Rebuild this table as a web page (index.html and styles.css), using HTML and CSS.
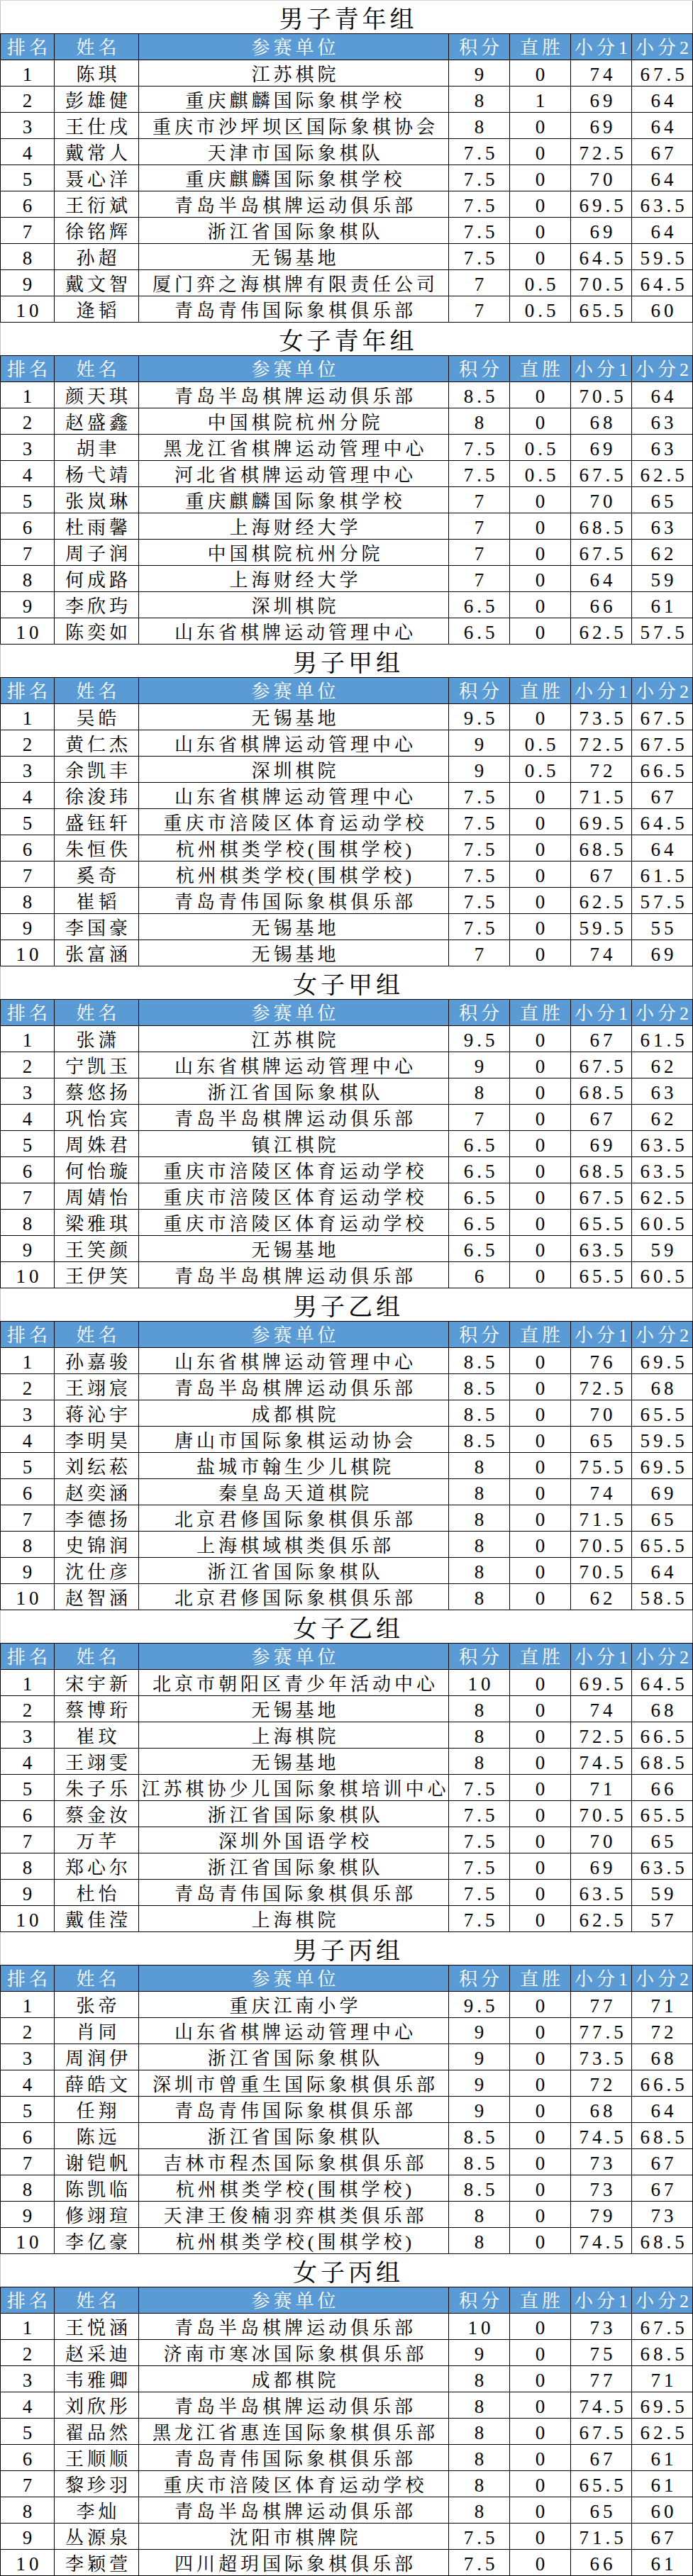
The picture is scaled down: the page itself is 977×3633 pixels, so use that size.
FILE: index.html
```html
<!DOCTYPE html>
<html lang="zh-CN">
<head>
<meta charset="utf-8">
<title>成绩表</title>
<link rel="stylesheet" href="styles.css">
</head>
<body>
<div class="sheet">

<section class="group">
<div class="title">男子青年组</div>
<div class="row head"><div>排名</div><div>姓名</div><div>参赛单位</div><div>积分</div><div>直胜</div><div>小分1</div><div>小分2</div></div>
<div class="row"><div>1</div><div>陈琪</div><div>江苏棋院</div><div>9</div><div>0</div><div>74</div><div>67.5</div></div>
<div class="row"><div>2</div><div>彭雄健</div><div>重庆麒麟国际象棋学校</div><div>8</div><div>1</div><div>69</div><div>64</div></div>
<div class="row"><div>3</div><div>王仕戌</div><div>重庆市沙坪坝区国际象棋协会</div><div>8</div><div>0</div><div>69</div><div>64</div></div>
<div class="row"><div>4</div><div>戴常人</div><div>天津市国际象棋队</div><div>7.5</div><div>0</div><div>72.5</div><div>67</div></div>
<div class="row"><div>5</div><div>聂心洋</div><div>重庆麒麟国际象棋学校</div><div>7.5</div><div>0</div><div>70</div><div>64</div></div>
<div class="row"><div>6</div><div>王衍斌</div><div>青岛半岛棋牌运动俱乐部</div><div>7.5</div><div>0</div><div>69.5</div><div>63.5</div></div>
<div class="row"><div>7</div><div>徐铭辉</div><div>浙江省国际象棋队</div><div>7.5</div><div>0</div><div>69</div><div>64</div></div>
<div class="row"><div>8</div><div>孙超</div><div>无锡基地</div><div>7.5</div><div>0</div><div>64.5</div><div>59.5</div></div>
<div class="row"><div>9</div><div>戴文智</div><div>厦门弈之海棋牌有限责任公司</div><div>7</div><div>0.5</div><div>70.5</div><div>64.5</div></div>
<div class="row"><div>10</div><div>逄韬</div><div>青岛青伟国际象棋俱乐部</div><div>7</div><div>0.5</div><div>65.5</div><div>60</div></div>
</section>

<section class="group">
<div class="title">女子青年组</div>
<div class="row head"><div>排名</div><div>姓名</div><div>参赛单位</div><div>积分</div><div>直胜</div><div>小分1</div><div>小分2</div></div>
<div class="row"><div>1</div><div>颜天琪</div><div>青岛半岛棋牌运动俱乐部</div><div>8.5</div><div>0</div><div>70.5</div><div>64</div></div>
<div class="row"><div>2</div><div>赵盛鑫</div><div>中国棋院杭州分院</div><div>8</div><div>0</div><div>68</div><div>63</div></div>
<div class="row"><div>3</div><div>胡聿</div><div>黑龙江省棋牌运动管理中心</div><div>7.5</div><div>0.5</div><div>69</div><div>63</div></div>
<div class="row"><div>4</div><div>杨弋靖</div><div>河北省棋牌运动管理中心</div><div>7.5</div><div>0.5</div><div>67.5</div><div>62.5</div></div>
<div class="row"><div>5</div><div>张岚琳</div><div>重庆麒麟国际象棋学校</div><div>7</div><div>0</div><div>70</div><div>65</div></div>
<div class="row"><div>6</div><div>杜雨馨</div><div>上海财经大学</div><div>7</div><div>0</div><div>68.5</div><div>63</div></div>
<div class="row"><div>7</div><div>周子润</div><div>中国棋院杭州分院</div><div>7</div><div>0</div><div>67.5</div><div>62</div></div>
<div class="row"><div>8</div><div>何成路</div><div>上海财经大学</div><div>7</div><div>0</div><div>64</div><div>59</div></div>
<div class="row"><div>9</div><div>李欣玙</div><div>深圳棋院</div><div>6.5</div><div>0</div><div>66</div><div>61</div></div>
<div class="row"><div>10</div><div>陈奕如</div><div>山东省棋牌运动管理中心</div><div>6.5</div><div>0</div><div>62.5</div><div>57.5</div></div>
</section>

<section class="group">
<div class="title">男子甲组</div>
<div class="row head"><div>排名</div><div>姓名</div><div>参赛单位</div><div>积分</div><div>直胜</div><div>小分1</div><div>小分2</div></div>
<div class="row"><div>1</div><div>吴皓</div><div>无锡基地</div><div>9.5</div><div>0</div><div>73.5</div><div>67.5</div></div>
<div class="row"><div>2</div><div>黄仁杰</div><div>山东省棋牌运动管理中心</div><div>9</div><div>0.5</div><div>72.5</div><div>67.5</div></div>
<div class="row"><div>3</div><div>余凯丰</div><div>深圳棋院</div><div>9</div><div>0.5</div><div>72</div><div>66.5</div></div>
<div class="row"><div>4</div><div>徐浚玮</div><div>山东省棋牌运动管理中心</div><div>7.5</div><div>0</div><div>71.5</div><div>67</div></div>
<div class="row"><div>5</div><div>盛钰轩</div><div>重庆市涪陵区体育运动学校</div><div>7.5</div><div>0</div><div>69.5</div><div>64.5</div></div>
<div class="row"><div>6</div><div>朱恒佚</div><div>杭州棋类学校(围棋学校)</div><div>7.5</div><div>0</div><div>68.5</div><div>64</div></div>
<div class="row"><div>7</div><div>奚奇</div><div>杭州棋类学校(围棋学校)</div><div>7.5</div><div>0</div><div>67</div><div>61.5</div></div>
<div class="row"><div>8</div><div>崔韬</div><div>青岛青伟国际象棋俱乐部</div><div>7.5</div><div>0</div><div>62.5</div><div>57.5</div></div>
<div class="row"><div>9</div><div>李国豪</div><div>无锡基地</div><div>7.5</div><div>0</div><div>59.5</div><div>55</div></div>
<div class="row"><div>10</div><div>张富涵</div><div>无锡基地</div><div>7</div><div>0</div><div>74</div><div>69</div></div>
</section>

<section class="group">
<div class="title">女子甲组</div>
<div class="row head"><div>排名</div><div>姓名</div><div>参赛单位</div><div>积分</div><div>直胜</div><div>小分1</div><div>小分2</div></div>
<div class="row"><div>1</div><div>张潇</div><div>江苏棋院</div><div>9.5</div><div>0</div><div>67</div><div>61.5</div></div>
<div class="row"><div>2</div><div>宁凯玉</div><div>山东省棋牌运动管理中心</div><div>9</div><div>0</div><div>67.5</div><div>62</div></div>
<div class="row"><div>3</div><div>蔡悠扬</div><div>浙江省国际象棋队</div><div>8</div><div>0</div><div>68.5</div><div>63</div></div>
<div class="row"><div>4</div><div>巩怡宾</div><div>青岛半岛棋牌运动俱乐部</div><div>7</div><div>0</div><div>67</div><div>62</div></div>
<div class="row"><div>5</div><div>周姝君</div><div>镇江棋院</div><div>6.5</div><div>0</div><div>69</div><div>63.5</div></div>
<div class="row"><div>6</div><div>何怡璇</div><div>重庆市涪陵区体育运动学校</div><div>6.5</div><div>0</div><div>68.5</div><div>63.5</div></div>
<div class="row"><div>7</div><div>周婧怡</div><div>重庆市涪陵区体育运动学校</div><div>6.5</div><div>0</div><div>67.5</div><div>62.5</div></div>
<div class="row"><div>8</div><div>梁雅琪</div><div>重庆市涪陵区体育运动学校</div><div>6.5</div><div>0</div><div>65.5</div><div>60.5</div></div>
<div class="row"><div>9</div><div>王笑颜</div><div>无锡基地</div><div>6.5</div><div>0</div><div>63.5</div><div>59</div></div>
<div class="row"><div>10</div><div>王伊笑</div><div>青岛半岛棋牌运动俱乐部</div><div>6</div><div>0</div><div>65.5</div><div>60.5</div></div>
</section>

<section class="group">
<div class="title">男子乙组</div>
<div class="row head"><div>排名</div><div>姓名</div><div>参赛单位</div><div>积分</div><div>直胜</div><div>小分1</div><div>小分2</div></div>
<div class="row"><div>1</div><div>孙嘉骏</div><div>山东省棋牌运动管理中心</div><div>8.5</div><div>0</div><div>76</div><div>69.5</div></div>
<div class="row"><div>2</div><div>王翊宸</div><div>青岛半岛棋牌运动俱乐部</div><div>8.5</div><div>0</div><div>72.5</div><div>68</div></div>
<div class="row"><div>3</div><div>蒋沁宇</div><div>成都棋院</div><div>8.5</div><div>0</div><div>70</div><div>65.5</div></div>
<div class="row"><div>4</div><div>李明昊</div><div>唐山市国际象棋运动协会</div><div>8.5</div><div>0</div><div>65</div><div>59.5</div></div>
<div class="row"><div>5</div><div>刘纭菘</div><div>盐城市翰生少儿棋院</div><div>8</div><div>0</div><div>75.5</div><div>69.5</div></div>
<div class="row"><div>6</div><div>赵奕涵</div><div>秦皇岛天道棋院</div><div>8</div><div>0</div><div>74</div><div>69</div></div>
<div class="row"><div>7</div><div>李德扬</div><div>北京君修国际象棋俱乐部</div><div>8</div><div>0</div><div>71.5</div><div>65</div></div>
<div class="row"><div>8</div><div>史锦润</div><div>上海棋域棋类俱乐部</div><div>8</div><div>0</div><div>70.5</div><div>65.5</div></div>
<div class="row"><div>9</div><div>沈仕彦</div><div>浙江省国际象棋队</div><div>8</div><div>0</div><div>70.5</div><div>64</div></div>
<div class="row"><div>10</div><div>赵智涵</div><div>北京君修国际象棋俱乐部</div><div>8</div><div>0</div><div>62</div><div>58.5</div></div>
</section>

<section class="group">
<div class="title">女子乙组</div>
<div class="row head"><div>排名</div><div>姓名</div><div>参赛单位</div><div>积分</div><div>直胜</div><div>小分1</div><div>小分2</div></div>
<div class="row"><div>1</div><div>宋宇新</div><div>北京市朝阳区青少年活动中心</div><div>10</div><div>0</div><div>69.5</div><div>64.5</div></div>
<div class="row"><div>2</div><div>蔡博珩</div><div>无锡基地</div><div>8</div><div>0</div><div>74</div><div>68</div></div>
<div class="row"><div>3</div><div>崔玟</div><div>上海棋院</div><div>8</div><div>0</div><div>72.5</div><div>66.5</div></div>
<div class="row"><div>4</div><div>王翊雯</div><div>无锡基地</div><div>8</div><div>0</div><div>74.5</div><div>68.5</div></div>
<div class="row"><div>5</div><div>朱子乐</div><div>江苏棋协少儿国际象棋培训中心</div><div>7.5</div><div>0</div><div>71</div><div>66</div></div>
<div class="row"><div>6</div><div>蔡金汝</div><div>浙江省国际象棋队</div><div>7.5</div><div>0</div><div>70.5</div><div>65.5</div></div>
<div class="row"><div>7</div><div>万芊</div><div>深圳外国语学校</div><div>7.5</div><div>0</div><div>70</div><div>65</div></div>
<div class="row"><div>8</div><div>郑心尔</div><div>浙江省国际象棋队</div><div>7.5</div><div>0</div><div>69</div><div>63.5</div></div>
<div class="row"><div>9</div><div>杜怡</div><div>青岛青伟国际象棋俱乐部</div><div>7.5</div><div>0</div><div>63.5</div><div>59</div></div>
<div class="row"><div>10</div><div>戴佳滢</div><div>上海棋院</div><div>7.5</div><div>0</div><div>62.5</div><div>57</div></div>
</section>

<section class="group">
<div class="title">男子丙组</div>
<div class="row head"><div>排名</div><div>姓名</div><div>参赛单位</div><div>积分</div><div>直胜</div><div>小分1</div><div>小分2</div></div>
<div class="row"><div>1</div><div>张帝</div><div>重庆江南小学</div><div>9.5</div><div>0</div><div>77</div><div>71</div></div>
<div class="row"><div>2</div><div>肖同</div><div>山东省棋牌运动管理中心</div><div>9</div><div>0</div><div>77.5</div><div>72</div></div>
<div class="row"><div>3</div><div>周润伊</div><div>浙江省国际象棋队</div><div>9</div><div>0</div><div>73.5</div><div>68</div></div>
<div class="row"><div>4</div><div>薛皓文</div><div>深圳市曾重生国际象棋俱乐部</div><div>9</div><div>0</div><div>72</div><div>66.5</div></div>
<div class="row"><div>5</div><div>任翔</div><div>青岛青伟国际象棋俱乐部</div><div>9</div><div>0</div><div>68</div><div>64</div></div>
<div class="row"><div>6</div><div>陈远</div><div>浙江省国际象棋队</div><div>8.5</div><div>0</div><div>74.5</div><div>68.5</div></div>
<div class="row"><div>7</div><div>谢铠帆</div><div>吉林市程杰国际象棋俱乐部</div><div>8.5</div><div>0</div><div>73</div><div>67</div></div>
<div class="row"><div>8</div><div>陈凯临</div><div>杭州棋类学校(围棋学校)</div><div>8.5</div><div>0</div><div>73</div><div>67</div></div>
<div class="row"><div>9</div><div>修翊瑄</div><div>天津王俊楠羽弈棋类俱乐部</div><div>8</div><div>0</div><div>79</div><div>73</div></div>
<div class="row"><div>10</div><div>李亿豪</div><div>杭州棋类学校(围棋学校)</div><div>8</div><div>0</div><div>74.5</div><div>68.5</div></div>
</section>

<section class="group">
<div class="title">女子丙组</div>
<div class="row head"><div>排名</div><div>姓名</div><div>参赛单位</div><div>积分</div><div>直胜</div><div>小分1</div><div>小分2</div></div>
<div class="row"><div>1</div><div>王悦涵</div><div>青岛半岛棋牌运动俱乐部</div><div>10</div><div>0</div><div>73</div><div>67.5</div></div>
<div class="row"><div>2</div><div>赵采迪</div><div>济南市寒冰国际象棋俱乐部</div><div>9</div><div>0</div><div>75</div><div>68.5</div></div>
<div class="row"><div>3</div><div>韦雅卿</div><div>成都棋院</div><div>8</div><div>0</div><div>77</div><div>71</div></div>
<div class="row"><div>4</div><div>刘欣彤</div><div>青岛半岛棋牌运动俱乐部</div><div>8</div><div>0</div><div>74.5</div><div>69.5</div></div>
<div class="row"><div>5</div><div>翟品然</div><div>黑龙江省惠连国际象棋俱乐部</div><div>8</div><div>0</div><div>67.5</div><div>62.5</div></div>
<div class="row"><div>6</div><div>王顺顺</div><div>青岛青伟国际象棋俱乐部</div><div>8</div><div>0</div><div>67</div><div>61</div></div>
<div class="row"><div>7</div><div>黎珍羽</div><div>重庆市涪陵区体育运动学校</div><div>8</div><div>0</div><div>65.5</div><div>61</div></div>
<div class="row"><div>8</div><div>李灿</div><div>青岛半岛棋牌运动俱乐部</div><div>8</div><div>0</div><div>65</div><div>60</div></div>
<div class="row"><div>9</div><div>丛源泉</div><div>沈阳市棋牌院</div><div>7.5</div><div>0</div><div>71.5</div><div>67</div></div>
<div class="row"><div>10</div><div>李颖萱</div><div>四川超玥国际象棋俱乐部</div><div>7.5</div><div>0</div><div>66</div><div>61</div></div>
</section>

</div>
</body>
</html>
```

FILE: styles.css
```css
html, body {
  margin: 0;
  padding: 0;
  background: #ffffff;
}

.sheet {
  width: 977px;
  border-top: 1px solid #d2d2d2;
  font-family: "Liberation Serif", "Noto Serif CJK SC", "Noto Sans CJK SC", serif;
  color: #000;
}

.title {
  height: 46px;
  box-sizing: border-box;
  border-left: 1px solid #c4c4c4;
  border-right: 1px solid #555;
  display: flex;
  align-items: center;
  justify-content: center;
  padding-top: 8px;
  padding-left: 5px;
  font-size: 34px;
  letter-spacing: 5px;
  line-height: 1;
  white-space: nowrap;
}

.row {
  display: grid;
  grid-template-columns: 76px 119px 437px 86px 86px 86px 86px;
  height: 37px;
  box-sizing: border-box;
  border-left: 1px solid #000;
  border-bottom: 1px solid #000;
}

.row.head {
  height: 38px;
  border-top: 1px solid #000;
  background: #5b9bd5;
  color: #fff;
}

.row > div {
  box-sizing: border-box;
  border-right: 1px solid #000;
  display: flex;
  align-items: center;
  justify-content: center;
  padding-top: 5px;
  padding-left: 5px;
  font-size: 26px;
  letter-spacing: 5px;
  line-height: 1;
  white-space: nowrap;
  overflow: hidden;
}

.row.head > div {
  padding-top: 3px;
}

.row:not(.head) > div:first-child,
.row:not(.head) > div:nth-child(n+4) {
  font-size: 27px;
}
```
